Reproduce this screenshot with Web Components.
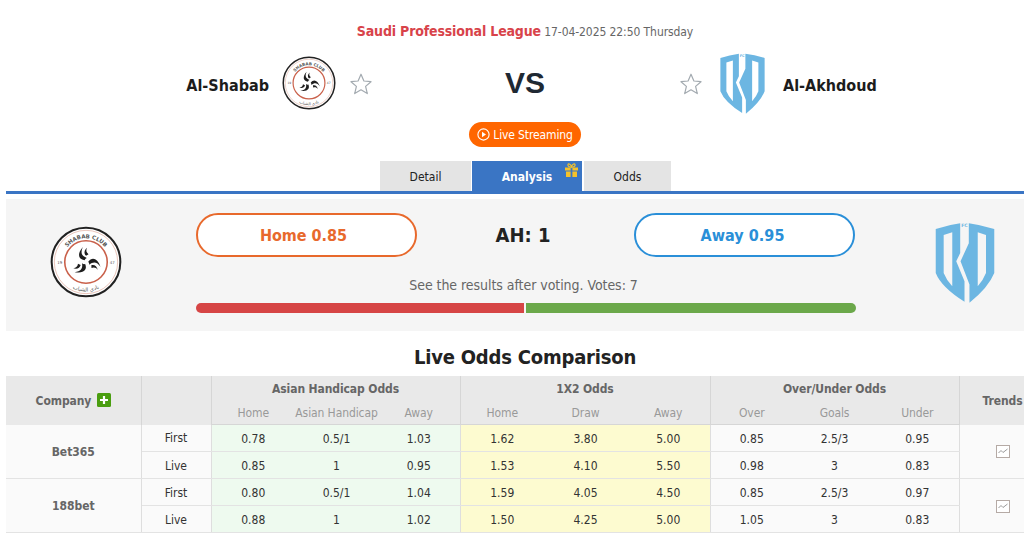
<!DOCTYPE html>
<html>
<head>
<meta charset="utf-8">
<title>Al-Shabab vs Al-Akhdoud</title>
<style>
  html, body { margin: 0; padding: 0; background: #fff; overflow: hidden; height: 534px; }
  body { font-family: "DejaVu Sans Condensed", "DejaVu Sans", sans-serif; font-size: 12px; color: #222; }
  #page { width: 1038px; margin-left: 6px; }
</style>
</head>
<body>
<div id="page">
  <match-header league="Saudi Professional League" time="17-04-2025 22:50 Thursday" home="Al-Shabab" away="Al-Akhdoud"></match-header>
  <tab-bar></tab-bar>
  <vote-panel home="0.85" away="0.95" line="1" votes="7"></vote-panel>
  <odds-table></odds-table>
</div>

<script>
const shababLogo = `
  <svg viewBox="-50 -50 100 100" xmlns="http://www.w3.org/2000/svg">
    <defs>
      <path id="top" d="M-33 0 A33 33 0 0 1 33 0"></path>
      <path id="bot" d="M-41 0 A41 41 0 0 0 41 0"></path>
      <path id="blade" d="M-1 -3 C-9 -7 -8 -15 3 -21 C-3 -15 -3 -10 3 -5 C1 -5 0 -4 -1 -3 Z"></path>
      <path id="blade2" d="M3 -8 C1 -12 3 -16 8 -18 C5 -15 5 -12 7 -9 Z"></path>
    </defs>
    <circle r="47.7" fill="#fff" stroke="#222" stroke-width="2.8"></circle>
    <circle r="44" fill="none" stroke="#d99a88" stroke-width="0.8"></circle>
    <circle r="29.5" fill="#fff" stroke="#c9604a" stroke-width="2.2"></circle>
    <text font-family="DejaVu Sans" font-size="7.6" font-weight="700" fill="#555"><textPath href="#top" startOffset="50%" text-anchor="middle">SHABAB CLUB</textPath></text>
    <text font-family="DejaVu Sans" font-size="7.5" fill="#555"><textPath href="#bot" startOffset="50%" text-anchor="middle">نادي الشباب</textPath></text>
    <text x="-36.5" y="2.5" font-family="DejaVu Sans" font-size="5.5" fill="#555" text-anchor="middle">19</text>
    <text x="36.5" y="2.5" font-family="DejaVu Sans" font-size="5.5" fill="#555" text-anchor="middle">47</text>
    <g fill="#1e1e1e" transform="rotate(-20)">
      <use href="#blade"></use>
      <use href="#blade" transform="rotate(120)"></use>
      <use href="#blade" transform="rotate(240)"></use>
      <use href="#blade2"></use>
      <use href="#blade2" transform="rotate(120)"></use>
      <use href="#blade2" transform="rotate(240)"></use>
    </g>
  </svg>`;

const akhdoudLogo = `
  <svg viewBox="107 62 179 248" xmlns="http://www.w3.org/2000/svg">
    <path fill="#6cb6e2" fill-rule="evenodd" d="
      M108 86 Q145 74 182 69 L182 159 L170 184 L195 244 L195 306 Q125 262 108 219 Z
      M132 104 L158 96 L158 259 Q140 240 132 219 Z
      M208 69 Q245 74 285 86 L285 219 Q268 262 210 309 L210 254 L183 184 L208 129 Z
      M235 96 L260 104 L260 219 Q252 240 235 259 Z"></path>
    <text x="195" y="81" font-family="DejaVu Sans" font-size="14" font-weight="700" fill="#6cb6e2" text-anchor="middle">FC</text>
  </svg>`;

class TeamLogo extends HTMLElement {
  connectedCallback() {
    const root = this.shadowRoot || this.attachShadow({ mode: "open" });
    root.innerHTML = `
      <style>
        :host { display: block; width: var(--logo-w, 54px); height: var(--logo-h, 54px); }
        svg { display: block; width: 100%; height: 100%; }
      </style>
      ${this.getAttribute("team") === "shabab" ? shababLogo : akhdoudLogo}`;
  }
}

class FavStar extends HTMLElement {
  constructor() {
    super();
    this.attachShadow({ mode: "open" }).innerHTML = `
      <style>
        :host { display: block; width: 22px; height: 22px; }
        svg { display: block; }
      </style>
      <svg width="22" height="22" viewBox="0 0 22 22">
        <path d="M11 1.2 L13.9 8 L21 8.7 L15.6 13.4 L17.3 20.6 L11 16.8 L4.7 20.6 L6.4 13.4 L1 8.7 L8.1 8 Z" fill="#fff" stroke="#a3aab0" stroke-width="1.2" stroke-linejoin="round"></path>
      </svg>`;
  }
}

class MatchHeader extends HTMLElement {
  connectedCallback() {
    const root = this.shadowRoot || this.attachShadow({ mode: "open" });
    root.innerHTML = `
      <style>
        :host { display: block; height: 161px; padding-top: 22px; box-sizing: border-box; }
        .league { text-align: center; height: 18px; line-height: 18px; font-size: 12px; color: #666; letter-spacing: -.08px; }
        .league b { font-size: 14px; color: #d8434a; letter-spacing: -.16px; }
        .teams { display: grid; grid-template-columns: 366px 308px 1fr; align-items: center; height: 60px; margin-top: 14px; }
        .side { display: flex; align-items: center; }
        .side.home { justify-content: flex-end; gap: 14px; }
        .side.away { gap: 18px; }
        .name { font-size: 16px; font-weight: 700; color: #1c1c1c; padding-top: 2px; }
        .side.home .name { margin-right: -1px; }
        .side team-logo { margin-top: -2px; }
        .vs { text-align: center; font: 700 30px "Liberation Sans", sans-serif; color: #1f2933; margin-top: -2px; padding-right: 2px; }
        .away-logo { --logo-w: 45px; --logo-h: 62px; }
        .live { display: flex; justify-content: center; margin-top: 8px; }
        .live span { display: flex; align-items: center; gap: 3px; height: 25px; padding: 0 8px; border-radius: 13px; background: #ff6600; color: #fff; font-size: 12px; letter-spacing: -.12px; }
      </style>
      <div class="league"><b>${this.getAttribute("league")}</b> ${this.getAttribute("time")}</div>
      <div class="teams">
        <div class="side home">
          <span class="name">${this.getAttribute("home")}</span>
          <team-logo team="shabab"></team-logo>
          <fav-star></fav-star>
        </div>
        <div class="vs">VS</div>
        <div class="side away">
          <fav-star></fav-star>
          <team-logo class="away-logo" team="akhdoud"></team-logo>
          <span class="name">${this.getAttribute("away")}</span>
        </div>
      </div>
      <div class="live"><span>
        <svg width="13" height="13" viewBox="0 0 13 13"><circle cx="6.5" cy="6.5" r="5.6" fill="none" stroke="#fff" stroke-width="1.1"></circle><path d="M5 3.8 L9 6.5 L5 9.2 Z" fill="#fff"></path></svg>
        Live Streaming</span></div>`;
  }
}

class TabBar extends HTMLElement {
  constructor() {
    super();
    this.attachShadow({ mode: "open" }).innerHTML = `
      <style>
        :host { display: flex; justify-content: flex-start; gap: 2px; height: 33px; box-sizing: border-box; padding-left: 374px; border-bottom: 3px solid #3a75c4; }
        div { position: relative; display: flex; align-items: center; justify-content: center; height: 30px; padding-top: 1px; box-sizing: border-box; background: #e4e4e4; font-size: 12px; color: #222; }
        .a { width: 91px; margin-right: -1px; }
        .b { width: 110px; background: #3a75c4; color: #fff; font-weight: 700; }
        .c { width: 87px; }
        svg { position: absolute; left: 93px; top: 2px; }
      </style>
      <div class="a">Detail</div>
      <div class="b">Analysis
        <svg width="13" height="14" viewBox="0 0 13 14"><path d="M0 4.5h13v3H0z M1 8.5h11V14H1z" fill="#f5c22a"></path><path d="M5.6 4.5h1.8V14H5.6z" fill="#3a75c4"></path><path d="M6.5 4.2 C4.4 4.2 2.4 3.2 3 1.5 C3.7 .2 5.7 1.2 6.5 3.6 C7.3 1.2 9.3 .2 10 1.5 C10.6 3.2 8.6 4.2 6.5 4.2 Z" fill="none" stroke="#f5c22a" stroke-width="1.2"></path></svg>
      </div>
      <div class="c">Odds</div>`;
  }
}

class VotePanel extends HTMLElement {
  connectedCallback() {
    const root = this.shadowRoot || this.attachShadow({ mode: "open" });
    root.innerHTML = `
      <style>
        :host { display: grid; grid-template-columns: 190px 660px 1fr; align-items: center; height: 132px; margin-top: 5px; background: #f5f5f5; }
        .logo { justify-self: start; margin: -7px 0 0 44px; --logo-w: 72px; --logo-h: 72px; }
        .logo.right { --logo-w: 60px; --logo-h: 82px; margin-left: 79px; }
        .mid { align-self: start; padding-top: 14px; }
        .row { display: flex; justify-content: space-between; align-items: center; padding-right: 1px; }
        .btn { width: 221px; height: 44px; box-sizing: border-box; display: flex; align-items: center; justify-content: center; border-radius: 22px; border: 2px solid; background: #fff; font-size: 16px; font-weight: 700; }
        .home { color: #e8692c; border-color: #e8692c; padding-right: 6px; }
        .away { color: #2a8fd8; border-color: #2a8fd8; padding-right: 4px; letter-spacing: .05px; }
        .ah { font-size: 20px; font-weight: 700; color: #222; margin-right: 5px; }
        .hint { text-align: center; margin-top: 18px; height: 20px; line-height: 20px; font-size: 14px; color: #666; padding-right: 5px; letter-spacing: -.05px; }
        .bar { display: flex; gap: 2px; height: 10px; margin-top: 8px; border-radius: 5px; overflow: hidden; }
        .bar i { display: block; height: 10px; }
        .red { width: 328px; background: #d64545; }
        .green { flex: 1; background: #6ba84a; }
      </style>
      <team-logo class="logo" team="shabab"></team-logo>
      <div class="mid">
        <div class="row">
          <div class="btn home">Home ${this.getAttribute("home")}</div>
          <div class="ah">AH: ${this.getAttribute("line")}</div>
          <div class="btn away">Away ${this.getAttribute("away")}</div>
        </div>
        <div class="hint">See the results after voting. Votes: ${this.getAttribute("votes")}</div>
        <div class="bar"><i class="red"></i><i class="green"></i></div>
      </div>
      <team-logo class="logo right" team="akhdoud"></team-logo>`;
  }
}

const oddsData = [
  { name: "Bet365", rows: [
    ["First", "0.78", "0.5/1", "1.03", "1.62", "3.80", "5.00", "0.85", "2.5/3", "0.95"],
    ["Live", "0.85", "1", "0.95", "1.53", "4.10", "5.50", "0.98", "3", "0.83"] ] },
  { name: "188bet", rows: [
    ["First", "0.80", "0.5/1", "1.04", "1.59", "4.05", "4.50", "0.85", "2.5/3", "0.97"],
    ["Live", "0.88", "1", "1.02", "1.50", "4.25", "5.00", "1.05", "3", "0.83"] ] }
];

const trendIcon = `<svg width="14" height="13" viewBox="0 0 14 13"><rect x=".5" y=".5" width="13" height="12" fill="#fff" stroke="#b5aaa5"></rect><path d="M2.5 8 L5 5.5 L7 7.5 L11.5 4" fill="none" stroke="#9a9a9a"></path></svg>`;

class OddsTable extends HTMLElement {
  connectedCallback() {
    const root = this.shadowRoot || this.attachShadow({ mode: "open" });
    const body = oddsData.map(c => c.rows.map((r, i) => `
      <tr>
        ${i === 0 ? `<td rowspan="2" class="co">${c.name}</td>` : ""}
        <td class="kind">${r[0]}</td>
        ${r.slice(1).map((v, j) => `<td class="${j < 3 ? "ah" : j < 6 ? "x2" : "ou"}${j % 3 === 0 ? " gl" : ""}">${v}</td>`).join("")}
        ${i === 0 ? `<td rowspan="2" class="tr">${trendIcon}</td>` : ""}
      </tr>`).join("")).join("");
    root.innerHTML = `
      <style>
        :host { display: block; }
        h2 { margin: 0; height: 31px; padding-top: 14px; line-height: 24px; text-align: center; font-size: 20px; font-weight: 700; color: #222; letter-spacing: -.2px; }
        table { table-layout: fixed; width: 1038px; border-collapse: collapse; font-size: 12px; text-align: center; color: #333; }
        th { background: #e9e9e9; color: #666; font-weight: 700; border-left: 1px solid #d6d6d6; height: 23px; padding: 1px 0 0; white-space: nowrap; letter-spacing: -.1px; }
        th:first-child { border-left: 0; }
        th.sub { color: #999; font-weight: 400; border-left: 0; }
        th.sub.gl { border-left: 1px solid #d6d6d6; }
        thead tr:last-child th { border-bottom: 1px solid #d6d6d6; }
        td { height: 25px; padding: 1px 0 0; border-bottom: 1px solid #e3e3e3; background: #fafafa; }
        td.co { font-weight: 700; color: #666; border-right: 1px solid #dedede; }
        td.kind { background: #fafafa; border-right: 1px solid #dedede; }
        td.ah { background: #eefaef; }
        td.x2 { background: #fdfbd0; }
        td.x2.gl { border-left: 1px solid #dedede; }
        td.ou.gl { border-left: 1px solid #dedede; }
        td.tr { border-left: 1px solid #dedede; }
        td.tr svg { display: block; margin: 0 auto 0 36px; }
        .plus { display: inline-block; vertical-align: -2px; width: 14px; height: 14px; margin-left: 2px; }
      </style>
      <h2>Live Odds Comparison</h2>
      <table>
        <colgroup>
          <col style="width:135px"><col style="width:70px">
          <col style="width:84px"><col style="width:83px"><col style="width:82px">
          <col style="width:84px"><col style="width:83px"><col style="width:83px">
          <col style="width:83px"><col style="width:83px"><col style="width:83px">
          <col style="width:85px">
        </colgroup>
        <thead>
          <tr>
            <th rowspan="2">Company <svg class="plus" viewBox="0 0 14 14"><rect width="14" height="14" rx="1.5" fill="#4a9e10"></rect><path d="M3 7h8M7 3v8" stroke="#fff" stroke-width="2.2"></path></svg></th>
            <th rowspan="2"></th>
            <th colspan="3">Asian Handicap Odds</th>
            <th colspan="3">1X2 Odds</th>
            <th colspan="3">Over/Under Odds</th>
            <th rowspan="2" style="text-align:left;padding-left:23px">Trends</th>
          </tr>
          <tr>
            <th class="sub gl">Home</th><th class="sub">Asian Handicap</th><th class="sub">Away</th>
            <th class="sub gl">Home</th><th class="sub">Draw</th><th class="sub">Away</th>
            <th class="sub gl">Over</th><th class="sub">Goals</th><th class="sub">Under</th>
          </tr>
        </thead>
        <tbody>${body}</tbody>
      </table>`;
  }
}

customElements.define("team-logo", TeamLogo);
customElements.define("fav-star", FavStar);
customElements.define("match-header", MatchHeader);
customElements.define("tab-bar", TabBar);
customElements.define("vote-panel", VotePanel);
customElements.define("odds-table", OddsTable);
</script>
</body>
</html>
